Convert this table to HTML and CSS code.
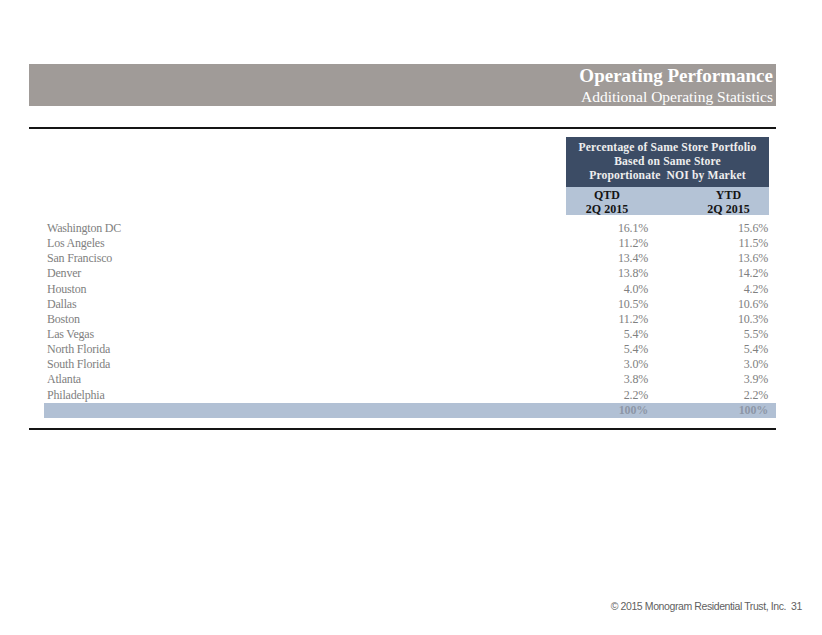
FILE: index.html
```html
<!DOCTYPE html>
<html>
<head>
<meta charset="utf-8">
<link rel="stylesheet" href="styles.css">
</head>
<body>
<div class="page">
  <div class="banner">
    <div class="title">Operating Performance</div>
    <div class="subtitle">Additional Operating Statistics</div>
  </div>
  <div class="rule top-rule"></div>
  <div class="table">
    <div class="row head-row">
      <div></div>
      <div class="navy">Percentage of Same Store Portfolio<br>Based on Same Store<br>Proportionate&nbsp; NOI by Market</div>
    </div>
    <div class="row sub-row">
      <div></div>
      <div class="sub">QTD<br>2Q 2015</div>
      <div class="sub"></div>
      <div class="sub">YTD<br>2Q 2015</div>
    </div>
    <div class="body">
      <div class="row data"><div class="lbl">Washington DC</div><div class="num">16.1%</div><div></div><div class="num">15.6%</div></div>
      <div class="row data"><div class="lbl">Los Angeles</div><div class="num">11.2%</div><div></div><div class="num">11.5%</div></div>
      <div class="row data"><div class="lbl">San Francisco</div><div class="num">13.4%</div><div></div><div class="num">13.6%</div></div>
      <div class="row data"><div class="lbl">Denver</div><div class="num">13.8%</div><div></div><div class="num">14.2%</div></div>
      <div class="row data"><div class="lbl">Houston</div><div class="num">4.0%</div><div></div><div class="num">4.2%</div></div>
      <div class="row data"><div class="lbl">Dallas</div><div class="num">10.5%</div><div></div><div class="num">10.6%</div></div>
      <div class="row data"><div class="lbl">Boston</div><div class="num">11.2%</div><div></div><div class="num">10.3%</div></div>
      <div class="row data"><div class="lbl">Las Vegas</div><div class="num">5.4%</div><div></div><div class="num">5.5%</div></div>
      <div class="row data"><div class="lbl">North Florida</div><div class="num">5.4%</div><div></div><div class="num">5.4%</div></div>
      <div class="row data"><div class="lbl">South Florida</div><div class="num">3.0%</div><div></div><div class="num">3.0%</div></div>
      <div class="row data"><div class="lbl">Atlanta</div><div class="num">3.8%</div><div></div><div class="num">3.9%</div></div>
      <div class="row data"><div class="lbl">Philadelphia</div><div class="num">2.2%</div><div></div><div class="num">2.2%</div></div>
      <div class="row data total"><div class="lbl"></div><div class="num">100%</div><div></div><div class="num">100%</div><div></div></div>
    </div>
  </div>
  <div class="rule bottom-rule"></div>
  <div class="footer">© 2015 Monogram Residential Trust, Inc.&nbsp; 31</div>
</div>
</body>
</html>
```
FILE: styles.css
```css
html, body {
  margin: 0;
  padding: 0;
  background: #ffffff;
}
.page {
  width: 822px;
  height: 635px;
  box-sizing: border-box;
  padding: 64px 0 0 29px;
  display: flex;
  flex-direction: column;
  font-family: "Liberation Serif", "Times New Roman", serif;
  overflow: hidden;
}
.banner {
  width: 747px;
  height: 42px;
  box-sizing: border-box;
  background: #a09b98;
  color: #ffffff;
  text-align: right;
  padding: 2px 3px 0 0;
}
.title {
  font-size: 19px;
  font-weight: bold;
  line-height: 20px;
}
.subtitle {
  font-size: 15.5px;
  line-height: 18px;
  margin-top: 2px;
}
.rule {
  width: 747px;
  height: 2px;
  background: #151515;
}
.top-rule {
  margin-top: 21px;
}
.table {
  margin-left: 15px;
  margin-top: 8px;
  width: 732px;
}
.row {
  display: grid;
  grid-template-columns: 522px 82px 40px 81px 7px;
}
.navy {
  grid-column: 2 / 5;
  height: 50px;
  box-sizing: border-box;
  background: #3c4c65;
  color: #eeeeee;
  font-weight: bold;
  font-size: 11.6px;
  line-height: 14px;
  text-align: center;
  padding-top: 4px;
  letter-spacing: 0.15px;
}
.sub {
  background: #b4c3d6;
  color: #141414;
  font-weight: bold;
  font-size: 12px;
  line-height: 14px;
  height: 28px;
  box-sizing: border-box;
  padding-top: 1px;
  text-align: center;
}
.body {
  margin-top: 6px;
}
.data {
  font-size: 12px;
  line-height: 15.15px;
  height: 15.15px;
  color: #808080;
  letter-spacing: -0.2px;
}
.lbl {
  padding-left: 3px;
  white-space: nowrap;
}
.num {
  text-align: right;
}
.data .num:nth-child(4) {
  padding-right: 1px;
}
.total {
  background: #b1c0d4;
  color: #8d97a6;
  font-weight: bold;
  height: 15px;
}
.bottom-rule {
  margin-top: 10px;
}
.footer {
  margin-top: auto;
  margin-bottom: 23px;
  width: 773px;
  text-align: right;
  font-family: "Liberation Sans", Arial, sans-serif;
  font-size: 10.5px;
  letter-spacing: -0.4px;
  line-height: 12px;
  color: #5f5f5f;
}
```
